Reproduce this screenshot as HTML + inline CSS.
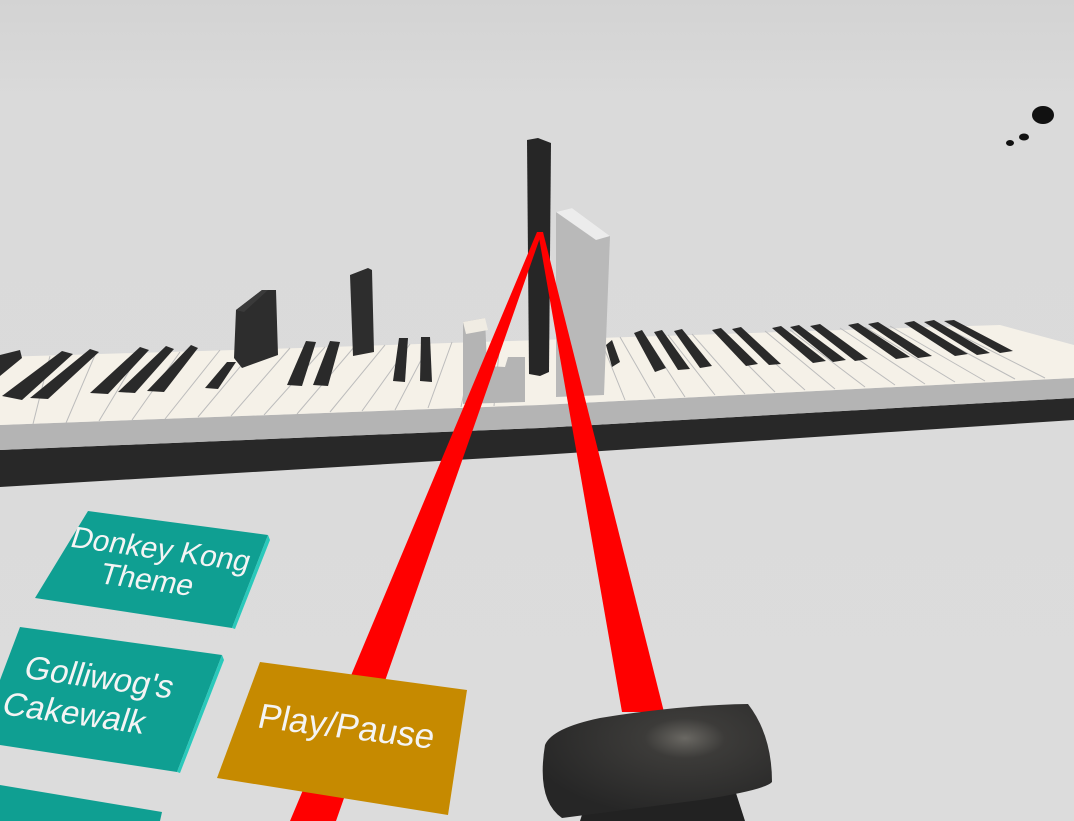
<!DOCTYPE html>
<html><head><meta charset="utf-8"><style>
html,body{margin:0;padding:0;width:1074px;height:821px;overflow:hidden;background:#dcdcdc}
svg{display:block}
text{font-family:"Liberation Sans",sans-serif;fill:#f4f4f4}
</style></head><body>
<svg width="1074" height="821" viewBox="0 0 1074 821">
<defs>
<linearGradient id="bg" x1="0" y1="0" x2="0" y2="1">
<stop offset="0" stop-color="#d3d3d3"/><stop offset="0.12" stop-color="#dadada"/><stop offset="1" stop-color="#dcdcdc"/>
</linearGradient>
<radialGradient id="ring" cx="0.62" cy="0.3" r="0.7">
<stop offset="0" stop-color="#6a6863"/><stop offset="0.25" stop-color="#3c3b39"/><stop offset="1" stop-color="#262626"/>
</radialGradient>
</defs>
<rect width="1074" height="821" fill="url(#bg)"/>
<ellipse cx="1043" cy="115" rx="11" ry="9" fill="#111"/>
<ellipse cx="1024" cy="137" rx="5" ry="3.5" fill="#111"/>
<ellipse cx="1010" cy="143" rx="4" ry="3" fill="#111"/>
<!-- keyboard base -->
<polygon points="0,450 540,428 1074,398 1074,420 540,455 0,487" fill="#282828"/>
<polygon points="0,425 540,405 1074,378 1074,398 540,428 0,450" fill="#b4b4b4"/>
<polygon points="0,357 300,348 540,340 780,332 1000,325 1074,345 1074,378 540,405 0,425" fill="#f5f1e8"/>
<g stroke="#bcbcbc" stroke-width="1">
<path d="M33,424 L50,356 M66,423 L95,355 M99,421 L140,353 M132,420 L180,352 M165,419 L220,350 M198,417 L255,349 M231,416 L290,348 M264,415 L325,347 M297,414 L355,346 M330,412 L385,345 M362,411 L410,344 M395,410 L430,343 M428,408 L452,342 M461,407 L475,341 M494,406 L500,341"/>
<path d="M625,400 L600,338 M655,398 L620,337 M685,397 L645,336 M715,395 L668,335 M745,394 L692,334 M775,392 L716,333 M805,390 L740,332 M835,389 L765,331 M865,387 L790,330 M895,385 L815,329 M925,384 L840,328 M955,382 L865,327 M985,381 L890,326 M1015,379 L915,325 M1045,378 L940,325"/>
</g>
<!-- black keys left -->
<g fill="#2a2a2a">
<polygon points="0,355 20,350 22,358 0,376"/>
<polygon points="2,396 62,351 73,354 22,400"/>
<polygon points="30,398 90,349 99,352 48,399"/>
<polygon points="90,393 140,347 149,350 108,394"/>
<polygon points="118,392 166,346 174,349 135,393"/>
<polygon points="147,391 191,345 198,348 164,392"/>
<polygon points="205,388 227,362 236,362 218,389"/>
<polygon points="287,385 306,341 316,342 302,386"/>
<polygon points="313,385 330,341 340,342 328,386"/>
<polygon points="393,381 399,338 408,338 405,382"/>
<polygon points="420,381 421,337 430,337 432,382"/>
<polygon points="468,335 477,336 474,350 467,348"/>
<polygon points="494,338 500,336 502,345 497,345"/>
</g>
<!-- black keys right -->
<g fill="#2a2a2a">
<polygon points="606,345 612,340 620,362 612,367"/>
<polygon points="634,333 642,330 666,368 655,372"/>
<polygon points="654,332 662,330 690,369 678,370"/>
<polygon points="674,331 682,329 712,366 700,368"/>
<polygon points="712,330 721,328 758,364 746,366"/>
<polygon points="732,329 741,327 781,364 769,365"/>
<polygon points="772,328 781,326 826,361 813,363"/>
<polygon points="790,327 799,325 846,360 833,362"/>
<polygon points="810,326 820,324 868,359 855,361"/>
<polygon points="848,325 858,323 910,357 896,359"/>
<polygon points="868,324 878,322 932,356 918,358"/>
<polygon points="904,323 914,321 968,354 955,356"/>
<polygon points="924,322 934,320 990,353 977,355"/>
<polygon points="944,321 954,320 1013,351 1000,353"/>
</g>
<!-- raised keys -->
<polygon points="236,310 262,290 276,290 278,355 242,368 234,358" fill="#2d2d2d"/>
<polygon points="236,310 262,290 268,290 244,312" fill="#3a3a3a"/>
<polygon points="350,275 368,268 372,270 374,352 353,356" fill="#2d2d2d"/>
<polygon points="463,322 485,318 487,366 505,367 508,357 525,357 525,402 463,404" fill="#b4b4b4"/>
<polygon points="463,322 485,318 488,330 466,334" fill="#f0ece3"/>
<polygon points="556,212 572,208 610,236 604,395 556,397" fill="#b9b9b9"/>
<polygon points="556,212 572,208 610,236 596,240" fill="#ececec"/>
<polygon points="527,140 538,138 551,143 549,372 540,376 529,374" fill="#262626"/>
<!-- lasers -->
<polygon points="537,232 542,232 336,821 290,821" fill="#ff0000"/>
<polygon points="538,232 543,232 664,712 622,712" fill="#ff0000"/>
<!-- buttons -->
<polygon points="88,511 268,535 232,628 35,598" fill="#0f9f92"/>
<polygon points="268,535 270,540 235,629 232,628" fill="#2ac9bb"/>
<g transform="translate(158,559) rotate(8) skewX(-10)"><text x="0" y="0" font-size="30" text-anchor="middle">Donkey Kong</text><text x="-4" y="32" font-size="30" text-anchor="middle">Theme</text></g>
<polygon points="20,627 222,655 177,772 0,745 0,680" fill="#0f9f92"/>
<polygon points="222,655 224,660 180,773 177,772" fill="#2ac9bb"/>
<g transform="translate(96,688) rotate(8) skewX(-10)"><text x="0" y="0" font-size="33" text-anchor="middle">Golliwog's</text><text x="-13" y="39" font-size="33" text-anchor="middle">Cakewalk</text></g>
<polygon points="0,785 162,812 160,821 0,821" fill="#0f9f92"/>
<polygon points="260,662 467,690 448,815 217,778" fill="#c68a00"/>
<g transform="translate(344,738) rotate(7) skewX(-6)"><text x="0" y="0" font-size="35" text-anchor="middle">Play/Pause</text></g>
<!-- controller -->
<polygon points="590,790 735,790 745,821 580,821" fill="#222"/>
<path d="M545,745 Q552,728 600,718 Q680,705 748,704 Q772,735 772,782 Q765,790 700,800 L562,818 Q536,800 545,745 Z" fill="url(#ring)"/>
</svg>
</body></html>
